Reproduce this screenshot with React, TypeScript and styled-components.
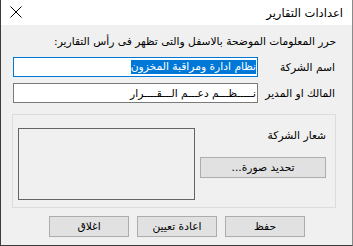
import React from "react";
import styled, { createGlobalStyle } from "styled-components";

const Global = createGlobalStyle`
  html, body { margin: 0; padding: 0; background: #f0f0f0; }
  body { width: 353px; height: 246px; overflow: hidden; }
  * { box-sizing: border-box; }
`;

const FONT = `"DejaVu Sans", "Noto Sans", sans-serif`;

const Window = styled.div`
  width: 353px;
  height: 246px;
  display: flex;
  flex-direction: column;
  background: #f0f0f0;
  font-family: ${FONT};
  font-size: 10.7px;
  color: #000;
  direction: rtl;
  border-left: 1px solid #3c3c3c;
  border-bottom: 1px solid #3c3c3c;
  border-right: 1px solid #8a8a8a;
`;

const TitleBar = styled.div`
  height: 25px;
  flex: 0 0 25px;
  background: #fff;
  display: flex;
  align-items: center;
  justify-content: space-between;
  padding: 0 9px 0 9px;
`;

const Title = styled.div`
  font-size: 11.5px;
  line-height: 25px;
  padding-top: 1px;
`;

const CloseBtn = styled.div`
  width: 12px;
  height: 12px;
  display: flex;
  align-items: center;
  justify-content: center;
  margin-top: -2px;
`;

const Body = styled.div`
  flex: 1;
  display: flex;
  flex-direction: column;
  padding: 9px 16px 0 12px;
`;

const Instruction = styled.div`
  height: 15px;
  line-height: 15px;
  margin-bottom: 8px;
`;

const Row = styled.div`
  display: flex;
  align-items: center;
  height: 20px;
  margin-bottom: 6px;
`;

const Label = styled.div`
  width: 78px;
  flex: 0 0 78px;
  padding-right: 1px;
`;

const Input = styled.div<{ $focused?: boolean }>`
  width: 245px;
  height: 20px;
  background: #fff;
  border: 1px solid ${(p) => (p.$focused ? "#0078d7" : "#7a7a7a")};
  display: flex;
  align-items: center;
  padding: 0 1px;
  white-space: nowrap;
  overflow: hidden;
`;

const Selected = styled.span`
  background: #0078d7;
  color: #fff;
  line-height: 14px;
`;

const Group = styled.div`
  margin-top: 5px;
  width: 324px;
  height: 94px;
  border: 1px solid #dcdcdc;
  display: flex;
  padding: 13px 9px 7px 5px;
  justify-content: space-between;
`;

const GroupSide = styled.div`
  display: flex;
  flex-direction: column;
  align-items: flex-start;
`;

const LogoLabel = styled.div`
  margin-top: 1px;
  line-height: 14px;
`;

const Button = styled.button<{ $w: number }>`
  width: ${(p) => p.$w}px;
  height: 21px;
  background: #e1e1e1;
  border: 1px solid #adadad;
  font-family: ${FONT};
  font-size: 10.7px;
  color: #000;
  padding: 0;
  display: flex;
  align-items: center;
  justify-content: center;
  direction: rtl;
`;

const PickButton = styled(Button)`
  margin-top: 14px;
`;

const PictureBox = styled.div`
  width: 177px;
  height: 72px;
  border: 1px solid #646464;
`;

const Footer = styled.div`
  display: flex;
  gap: 8px;
  padding-right: 31px;
  margin-top: 8px;
`;

export default function App() {
  return (
    <>
      <Global />
      <Window>
        <TitleBar>
          <Title>اعدادات التقارير</Title>
          <CloseBtn>
            <svg width="12" height="12" viewBox="0 0 12 12">
              <path d="M0.5 0.5 L11.5 11.5 M11.5 0.5 L0.5 11.5" stroke="#000" strokeWidth="1" fill="none" />
            </svg>
          </CloseBtn>
        </TitleBar>
        <Body>
          <Instruction>حرر المعلومات الموضحة بالاسفل والتى تظهر فى رأس التقارير:</Instruction>
          <Row>
            <Label>اسم الشركة</Label>
            <Input $focused>
              <Selected>نظام ادارة ومراقبة المخزون</Selected>
            </Input>
          </Row>
          <Row>
            <Label>المالك او المدير</Label>
            <Input>نـــــظـــم دعـــم الـــقــــرار</Input>
          </Row>
          <Group>
            <GroupSide>
              <LogoLabel>شعار الشركة</LogoLabel>
              <PickButton $w={126}>تحديد صورة...</PickButton>
            </GroupSide>
            <PictureBox />
          </Group>
          <Footer>
            <Button $w={80}>حفظ</Button>
            <Button $w={80}>اعادة تعيين</Button>
            <Button $w={80}>اغلاق</Button>
          </Footer>
        </Body>
      </Window>
    </>
  );
}
